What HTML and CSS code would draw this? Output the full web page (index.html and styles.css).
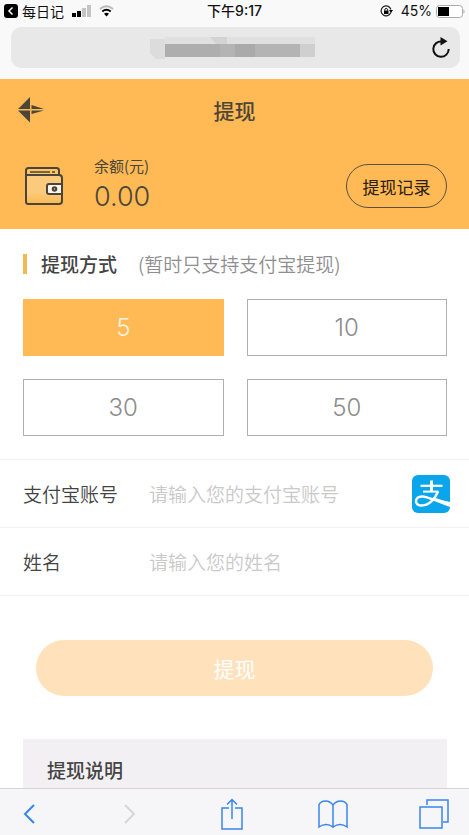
FILE: index.html
```html
<!DOCTYPE html>
<html lang="zh-CN">
<head>
<meta charset="utf-8">
<meta name="viewport" content="width=device-width, initial-scale=1">
<title>提现</title>
<link rel="stylesheet" href="styles.css">
</head>
<body>
<div class="status">
  <div class="status-side">
    <svg width="14" height="14" viewBox="0 0 14 14" aria-hidden="true"><rect width="14" height="14" rx="3"/><path d="M8.500 3.500 5 7l3.500 3.500" fill="none" stroke="#fff" stroke-width="1.500"/></svg>
    <span class="carrier">每日记</span>
    <svg class="signal" width="19" height="12" viewBox="0 0 19 12" aria-hidden="true"><path d="M0 8h4v4H0zM5 6h4v6H5z"/><path d="M10 3h4v9h-4zM15 0h4v12h-4z" fill="#c4c4c4"/></svg>
    <svg width="15" height="12" viewBox="0 0 15 12" aria-hidden="true"><path d="M1 4Q7.500-1.500 14 4" fill="none" stroke="#b9b9b9" stroke-width="2"/><path d="M3.300 6.500Q7.500 3 11.700 6.500" fill="none" stroke="#000" stroke-width="2"/><path d="M5 8.700Q7.500 6.800 10 8.700L7.500 11.500z"/></svg>
  </div>
  <time class="clock">下午9:17</time>
  <div class="status-side status-right">
    <svg width="13" height="12" viewBox="0 0 13 12" aria-hidden="true"><path d="M10.800 7.500A5 5 0 1 1 10.900 4.500" fill="none" stroke="#222" stroke-width="1.200"/><path d="M9 5h4l-2 3z"/><rect x="4" y="5.500" width="4.500" height="3.500"/><path d="M4.800 5.500V4.300q1.400-2 2.800 0v1.200" fill="none" stroke="#000"/></svg>
    <span>45%</span>
    <svg width="29" height="13" viewBox="0 0 29 13" aria-hidden="true"><rect x=".5" y=".5" width="26" height="12" rx="3" fill="#fff" stroke="#aaa"/><path d="M2 2h11v9H2z"/><path d="M27.500 4q2 2.500 0 5z" fill="#aaa"/></svg>
  </div>
</div>
<div class="address">
  <div class="address-field">
    <svg width="165" height="22" viewBox="0 0 165 22" aria-hidden="true"><path d="M0 2h15v20H6L0 16z" fill="#dcdcdc"/><path d="M15 0h150v7H15z" fill="#e0e0e0"/><path d="M60 0h17v7H66z" fill="#d3d3d3"/><path d="M15 7h150v13H15z" fill="#b4b4b4"/><path d="M15 7h55v13H15z" fill="#aeaeae"/><path d="M85 7h20v13H85z" fill="#aaa"/><path d="M150 7h15v13h-15z" fill="#cfcfcf"/></svg>
    <button class="reload" type="button" aria-label="刷新"><svg width="18" height="22" viewBox="0 0 18 22" aria-hidden="true"><path d="M10 4.500A7.700 7.700 0 1 0 16.700 12" fill="none" stroke="#111" stroke-width="2"/><path d="M8.500 0 15.500 4.200 8.500 8.500z" fill="#111"/></svg></button>
  </div>
</div>
<main>
  <header class="hero">
    <div class="titlebar">
      <button class="back" type="button" aria-label="返回"><svg width="26" height="26" viewBox="0 0 26 26" aria-hidden="true"><path d="M0 12 12 0v12zM0 13.500h12v12zM13.500 8 26 12H13.500zM13.500 13.500H26L13.500 17z" fill="#4b4638"/></svg></button>
      <h1>提现</h1>
    </div>
    <div class="account">
      <svg class="wallet" width="38" height="38" viewBox="0 0 38 38" aria-hidden="true"><defs><linearGradient id="leather" x1="0" y1="0" x2="0" y2="1"><stop offset=".6" stop-color="#fbca7c"/><stop offset="1" stop-color="#f9b950"/></linearGradient></defs><g stroke="#4a443a" stroke-width="2" stroke-linejoin="round"><path d="M1 8V3.500Q1 1 3.500 1h28Q34 1 34 3.500V8" fill="#ffc466"/><path d="M1 8h33q3 0 3 3v23q0 3-3 3H3.500Q1 37 1 34.500z" fill="url(#leather)"/><path d="M37 17H24q-2 0-2 2v6q0 2 2 2h13z" fill="#fff7ee"/><circle cx="29.500" cy="22" r="1.800" fill="#bbb"/></g><path d="M5 5h20M27 5h3M33 5h1" stroke="#4a443a" stroke-width="1.500"/></svg>
      <div class="balance"><span class="balance-label">余额(元)</span><strong>0.00</strong></div>
      <button class="history" type="button">提现记录</button>
    </div>
  </header>
  <form>
    <section class="method">
      <h2>提现方式 <small>(暂时只支持支付宝提现)</small></h2>
      <div class="amounts">
        <button class="amount selected" type="button">5</button>
        <button class="amount" type="button">10</button>
        <button class="amount" type="button">30</button>
        <button class="amount" type="button">50</button>
      </div>
    </section>
    <div class="field">
      <label for="account">支付宝账号</label>
      <input id="account" type="text" placeholder="请输入您的支付宝账号">
      <svg width="38" height="38" viewBox="0 0 38 38" aria-hidden="true"><rect width="38" height="38" rx="6" fill="#0aa5ea"/><g fill="none" stroke="#fff"><path d="M8.500 10.800h22" stroke-width="2.200"/><path d="M19.500 5.500v11" stroke-width="3"/><path d="M11 16.600h15.500" stroke-width="2"/><path d="M26 16.500C23.500 23 17.500 30.500 10 30.500 5.500 30.500 4 28.500 4 26.200 4 23.500 6.200 21.300 10.500 21.500 16 21.700 21 25.500 38 29.500" stroke-width="2.400"/></g><path d="M22 22.500Q30 25.500 38 27v5Q29 29 20.500 24.500z" fill="#fff"/></svg>
    </div>
    <div class="field">
      <label for="name">姓名</label>
      <input id="name" type="text" placeholder="请输入您的姓名">
    </div>
    <button class="submit" type="submit">提现</button>
  </form>
  <section class="notes"><h2>提现说明</h2></section>
</main>
<nav class="toolbar" aria-label="浏览器">
  <button type="button" aria-label="后退"><svg width="12" height="20" viewBox="0 0 12 20"><path d="M11 1 2 10l9 9" stroke-width="2"/></svg></button>
  <button class="off" type="button" aria-label="前进"><svg width="12" height="20" viewBox="0 0 12 20"><path d="m1 1 9 9-9 9" stroke-width="2"/></svg></button>
  <button type="button" aria-label="分享"><svg width="22" height="32" viewBox="0 0 22 32"><path d="M8 10H1v21h20V10h-7M11 21V2M6 6.500 11 1.500l5 5"/></svg></button>
  <button type="button" aria-label="书签"><svg width="30" height="29" viewBox="0 0 30 29"><path d="M15 5Q12 1 7.500 1 3 1 1 4.500V27q7-5 14 0 7-5 14 0V4.500Q27 1 22.500 1 18 1 15 5v23"/></svg></button>
  <button type="button" aria-label="标签页"><svg width="30" height="30" viewBox="0 0 30 30"><path d="M1 8h22v21H1zM8 6V1h21v22h-5"/></svg></button>
</nav>
</body>
</html>
```
FILE: styles.css
```css
* { box-sizing: border-box; }

body {
  margin: 0;
  height: 100vh;
  display: flex;
  flex-direction: column;
  background: #fff;
  color: #444;
  font-family: "Noto Sans CJK SC", sans-serif;
}

button, input { font: inherit; margin: 0; padding: 0; border: 0; background: none; }
button { color: inherit; }
svg { display: block; flex: none; }
h1, h2 { margin: 0; font-weight: 500; }

.status {
  display: flex;
  align-items: center;
  height: 22px;
  padding: 0 4px;
  background: #f9f9f9;
  color: #111;
  font-size: 14px;
  line-height: 22px;
}
.status-side { flex: 1; display: flex; align-items: center; gap: 4px; }
.status-right { justify-content: flex-end; font-family: Inter, sans-serif; }
.status-right svg:first-child { margin-right: 4px; }
.signal { margin: 0 4px; }
.clock { font-family: Inter, "Noto Sans CJK SC", sans-serif; font-weight: 500; }

.address { padding: 5px 9px 11px 11px; background: #f9f9f9; }
.address-field {
  display: flex;
  align-items: center;
  justify-content: space-between;
  height: 41px;
  padding-left: 139px;
  padding-right: 10px;
  border-radius: 10px;
  background: #e8e8e8;
}

main { flex: 1; min-height: 0; overflow: hidden; }

.hero { height: 150px; background: #ffb955; }
.titlebar {
  display: grid;
  grid-template-columns: 1fr auto 1fr;
  align-items: center;
  height: 62px;
  padding: 0 18px;
}
.back { justify-self: start; }
.titlebar h1 { font-size: 21px; line-height: 32px; color: #4b4638; }
.account { display: flex; align-items: center; padding: 14px 22px 0 25px; }
.balance { flex: 1; margin-left: 31px; color: #4b4638; }
.balance-label { display: block; font-size: 15px; line-height: 22px; }
.balance strong {
  display: block;
  font: 300 27px/40px Inter, sans-serif;
}
.history {
  width: 101px;
  height: 44px;
  border: 1px solid #5c523f;
  border-radius: 22px;
  color: #2b2011;
  font-size: 17px;
}

.method { padding: 20px 22px 23px 23px; }
.method h2 {
  display: flex;
  align-items: center;
  font-size: 19px;
  line-height: 30px;
  white-space: nowrap;
}
.method h2::before {
  content: "";
  width: 4px;
  height: 20px;
  margin-right: 14px;
  background: #f5b954;
}
.method small { margin-left: 21px; font-size: 19px; font-weight: 350; color: #8e8e90; }
.amounts {
  display: grid;
  grid-template-columns: 1fr 1fr;
  gap: 23px;
  margin-top: 20px;
}
.amount {
  height: 57px;
  border: 1px solid #b0b0b4;
  color: #8c8c8c;
  font: 300 24px/32px Inter, sans-serif;
}
.selected { border-color: #ffb955; background: #ffb955; color: #fff5e3; }

.field {
  display: flex;
  align-items: center;
  height: 68px;
  padding: 0 19px 0 23px;
  border-top: 1px solid #f2f2f4;
  font-size: 19px;
  font-weight: 350;
}
.field label { width: 126px; }
.field input { flex: 1; min-width: 0; height: 40px; color: #444; outline: 0; }
.field input::placeholder { color: #c9c9c9; opacity: 1; }
.field + .field { border-bottom: 1px solid #f2f2f4; height: 69px; }

.submit {
  display: block;
  width: calc(100% - 72px);
  height: 56px;
  margin: 44px 36px 43px;
  border-radius: 28px;
  background: #ffe2bb;
  color: #fff;
  font-size: 21px;
}

.notes { min-height: 80px; margin: 0 22px 0 23px; padding: 16px 24px; background: #f2f0f3; }
.notes h2 { font-size: 19px; line-height: 30px; }

.toolbar {
  display: flex;
  align-items: center;
  justify-content: space-between;
  height: 47px;
  padding: 4px 19px 0 13px;
  border-top: 1px solid #d5d5d8;
  background: #f6f6f8;
}
.toolbar button { display: flex; justify-content: center; width: 32px; }
.toolbar svg { fill: none; stroke: #3985ec; stroke-width: 1.5; }
.toolbar .off svg { stroke: #d6d6d8; }
```
